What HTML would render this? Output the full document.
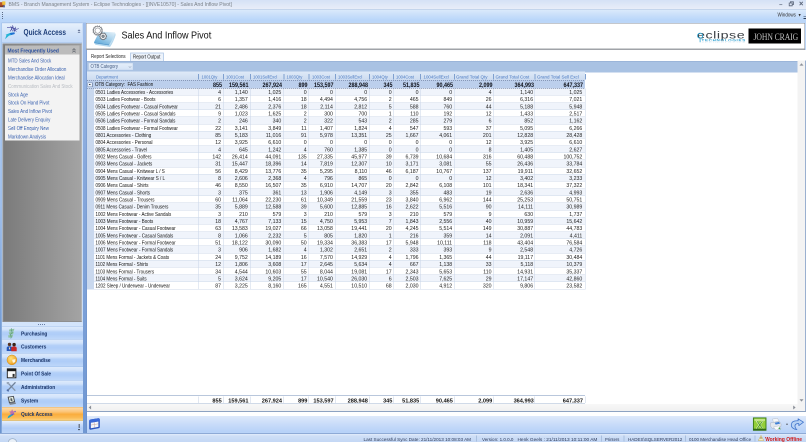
<!DOCTYPE html>
<html><head><meta charset="utf-8"><title>BMS - Sales And Inflow Pivot</title>
<style>
html,body{margin:0;padding:0;}
html{background:#bbd6f8;}
body{width:806px;height:442px;overflow:hidden;position:relative;font-family:"Liberation Sans",sans-serif;font-size:5px;color:#222;}
div{position:absolute;box-sizing:border-box;white-space:nowrap;}
#title{left:0;top:0;width:806px;height:9px;background:linear-gradient(#d5e2f6,#e9eef9);}
#title .t{left:8.7px;top:0.3px;font-size:5.5px;color:#7a8088;line-height:7px;transform:scaleX(.922);transform-origin:0 0;}
#menu{left:0;top:8.9px;width:806px;height:11.7px;background:linear-gradient(#dcebfc,#c8defa 55%,#b9d6fa);border-top:0.8px solid #adc0dc;}
#menu .w{left:777.3px;top:2.7px;font-size:5px;color:#333;line-height:6px;transform:scaleX(.91);transform-origin:0 0;}
/* left panel */
#lp{left:1.4px;top:22.4px;width:81.8px;height:410.6px;background:#c9ddf7;border:0.8px solid #9ebde6;border-right-color:#c9ddf7;}
#qa{left:2.2px;top:23.4px;width:80px;height:19px;background:linear-gradient(#e6f0fc,#d4e4f9 50%,#c4dbf9);border-bottom:0.8px solid #9dbbe6;}
#qa .t{left:21.1px;top:4.2px;font-size:7.8px;font-weight:bold;color:#1e3f7a;line-height:10px;transform:scaleX(.835);transform-origin:0 0;}
#gbx{left:2.6px;top:43.4px;width:79.2px;height:278.4px;background:linear-gradient(90deg,#7b7b7b,#a4a4a4);border:1px solid #8e8e8e;border-right-color:#b4b4b4;}
#mfu{left:5px;top:45.6px;width:74.6px;height:8.7px;background:#bcbcbc;}
#mfu .t{left:2.7px;top:1.5px;font-size:5.6px;font-weight:bold;color:#2a4f9e;line-height:7px;transform:scaleX(.88);transform-origin:0 0;}
#lst{left:5px;top:54.3px;width:74.6px;height:86.2px;background:#f3f3f3;}
.li{left:8.1px;font-size:5.3px;line-height:8px;color:#3a62b0;transform:scaleX(.84);transform-origin:0 0;}
.li.dis{color:#b8bcc2;}
#split{left:2.2px;top:321.8px;width:80.6px;height:4.6px;background:#d3e4fb;}
.nav{left:2.2px;width:80.6px;background:linear-gradient(#deebfc,#d2e3fb 26%,#b3d0f8 44%,#afcdf8 62%,#bfd8fa);border-top:0.9px solid #9fbfea;}
.nav span{position:absolute;left:18.9px;top:3.2px;font-size:5.5px;font-weight:bold;color:#1a3468;line-height:7px;transform:scaleX(.88);transform-origin:0 0;}
.nav.sel{background:linear-gradient(#fddcae,#fcc67a 32%,#faad3e 52%,#fbbb54 78%,#fdd582);border-top-color:#e8b060;}
#lbot{left:2.2px;top:420.7px;width:80.6px;height:12.3px;background:linear-gradient(#e6effc,#c4d9f9 35%,#b2cef8 60%,#bdd6f9);border-top:0.6px solid #c9b27a;}
/* main */
#vsep{left:83.1px;top:22.4px;width:3px;height:411px;background:linear-gradient(#a0beea,#88a9dc 35%,#7098d3);}
#lmar{left:0;top:21px;width:1.8px;height:412px;background:linear-gradient(#b9d5f8,#9fbfec 45%,#6c96d1 80%,#6a93cf);}
#vline{left:86px;top:50px;width:0.9px;height:383px;background:linear-gradient(#86a6d8,#6d92cc);}
#hdr{left:85.8px;top:23.2px;width:719.2px;height:26.6px;background:#fff;border:0.9px solid #8a909a;border-bottom:1.5px solid #a0a3a8;}
#hdr .t{left:35.1px;top:5.5px;font-size:10.4px;color:#111;line-height:12px;transform:scaleX(.872);transform-origin:0 0;}
#tabs{left:85.8px;top:50px;width:720px;height:11px;background:#fff;}
#tab1{left:91px;top:53px;font-size:5px;line-height:7px;color:#222;transform:scaleX(.876);transform-origin:0 0;}
#tab2{left:130px;top:52.4px;width:34px;height:8.4px;border:1px solid #bcd0ea;border-bottom:none;background:#edf3fb;border-radius:1px 1px 0 0;}
#tab2 .t{left:1.9px;top:0px;font-size:5px;line-height:7px;color:#222;transform:scaleX(.87);transform-origin:0 0;}
#band{left:85.8px;top:60.6px;width:712px;height:11.8px;background:#a9c2e3;border-top:1px solid #8ea9d0;}
#otb{left:88.7px;top:62.9px;width:44.1px;height:7px;background:linear-gradient(#e4eefa,#d6e4f6);border:0.6px solid #c9d9ee;}
#otb .t{left:1.2px;top:0px;font-size:5px;line-height:6px;color:#465c82;transform:scaleX(.86);transform-origin:0 0;}
#gridbg{left:85.8px;top:72.4px;width:712px;height:331px;background:#fff;}
.hrow{left:87px;width:498px;background:linear-gradient(#dfeaf8,#cddcf0);}
.ht{font-size:4.8px;line-height:8px;color:#4d7cc4;transform-origin:0 0;}
.hsep{width:1px;height:5.4px;background:#7fa0cf;}
.grow{background:linear-gradient(90deg,rgba(50,62,96,.75) 50%,transparent 50%) 0 0/2px 0.5px repeat-x,linear-gradient(90deg,rgba(50,62,96,.75) 50%,transparent 50%) 0 100%/2px 0.5px repeat-x,#bccfec;z-index:2;}
.gbox{z-index:3;width:4.8px;height:4.6px;border:0.8px solid #8497b8;background:#e6eef9;}
.gbox:after{content:'';position:absolute;left:0.7px;top:1.2px;width:1.8px;height:0.7px;background:#444;}
.gt{z-index:3;font-size:5.2px;line-height:7.4px;color:#111;transform:scaleX(.865);transform-origin:0 0;}
.gn{font-size:6px;line-height:7.4px;font-weight:bold;color:#10131c;text-align:right;transform:scaleX(.9);transform-origin:100% 0;z-index:3;}
.drow{background:#fff;border-bottom:0.5px solid #cfdaea;}
.drow.alt{background:#f0f4fb;}
.dt{font-size:5.2px;line-height:7.2px;color:#111;transform:scaleX(.865);transform-origin:0 0;}
.dn{font-size:5.2px;line-height:7.2px;color:#222;text-align:right;}
.ind{background:#c9d8ee;}
.vl{width:0.5px;background:#c9d5e8;}
.fn{font-size:5.6px;line-height:7px;font-weight:bold;color:#111;text-align:right;}
.fvl{width:0.5px;height:6.6px;background:#c3cfe2;}
#fline{left:85.8px;top:395.2px;width:499.4px;height:1px;background:#b9c7dc;}
#fline2{left:85.8px;top:403.1px;width:499.4px;height:0.8px;background:#d0dae8;}
#hscroll{left:85.8px;top:404px;width:712px;height:6.8px;background:linear-gradient(#f8f8f8,#f1f1f1);}
#vscroll{left:797.6px;top:60.6px;width:8.4px;height:350.4px;background:#f3f3f3;border-right:1px solid #9ab0d0;}
#bline{left:85.8px;top:410.8px;width:720.2px;height:1px;background:#8ea3c2;}
#bwhite{left:85.8px;top:411.8px;width:720.2px;height:4.3px;background:#fff;}
#btool{left:85.8px;top:416px;width:720.2px;height:16.6px;background:linear-gradient(#dfeafb,#c9dcf9 50%,#b6d1f8);}
#sline{left:0;top:432.6px;width:806px;height:1.4px;background:#8eaad6;border-top:0.6px solid #e6effc;}
#status{left:0;top:434px;width:806px;height:8px;background:linear-gradient(#e3edfb,#cfdff7 25%,#c4d8f5);}
#status .s{top:2.3px;font-size:4.8px;line-height:6px;color:#2c3a5a;transform-origin:0 0;}
#status .sep{top:1.6px;width:1px;height:6px;background:#a9bfde;}

svg{position:absolute;overflow:visible;}
#grip{left:2px;top:12px;width:1px;height:7px;background:repeating-linear-gradient(#5a6a86 0,#5a6a86 1px,transparent 1px,transparent 2px);}
#wc{left:776px;top:0px;width:30px;height:9px;}
#ovf{left:803.4px;top:15.6px;width:2.6px;height:3.4px;border-top:1px solid #2b3a55;border-bottom:1.2px solid #2b3a55;}
#jc{left:748.7px;top:28.4px;width:52.5px;height:15.3px;background:#000;}
#jc .t{left:4.6px;top:3.1px;font-family:"Liberation Serif",serif;font-size:9.2px;line-height:11px;color:#c2c2c2;transform:scaleX(.835);transform-origin:0 0;letter-spacing:-0.1px;}
#ecl{left:696.8px;top:29.1px;font-size:10.4px;line-height:12px;color:#3a3f44;letter-spacing:0.4px;transform:scaleX(1.37);transform-origin:0 0;}
#ecl2{left:701.4px;top:38.1px;font-size:3.9px;line-height:5px;color:#2a9fd0;font-weight:bold;letter-spacing:0.62px;transform:scaleX(1.15);transform-origin:0 0;}
#ecl3{left:701.4px;top:43.4px;font-size:3.9px;line-height:5px;color:#e4eef5;font-weight:bold;letter-spacing:0.62px;transform:scale(1.15,-0.7);transform-origin:0 0;}
#pin{left:77.8px;top:28.7px;font-size:4.6px;line-height:5px;color:#2b3a66;font-weight:bold;}
#chev{left:74.6px;top:47.6px;font-size:5px;line-height:6px;color:#555;}
#sdots{left:38px;top:323.8px;width:7px;height:1px;background:repeating-linear-gradient(90deg,#6a7fa6 0,#6a7fa6 1px,transparent 1px,transparent 2px);}
#lbdots{left:78.6px;top:424.6px;width:1.6px;height:3px;border-top:1px solid #222;border-bottom:1px solid #222;}
#lbarr{left:78px;top:429px;width:0;height:0;border-left:1.4px solid transparent;border-right:1.4px solid transparent;border-top:1.8px solid #222;}
.sarr{font-size:4px;line-height:5px;color:#8a8f98;}
#sc{left:0;top:0;width:1612px;height:884px;transform:scale(.5);transform-origin:0 0;will-change:transform;}
#z{left:0;top:0;width:806px;height:442px;zoom:2;}
</style></head><body><div id="sc"><div id="z">
<div id="title"><div class="t">BMS - Branch Management System - Eclipse Technologies - [[INVE10570] - Sales And Inflow Pivot]</div></div>
<div id="menu"><div class="w">Windows &nbsp;▾</div></div>
<div id="lmar"></div>
<div id="lp"></div>
<div id="qa"><div class="t">Quick Access</div></div>
<div id="gbx"></div>
<div id="mfu"><div class="t">Most Frequently Used</div></div>
<div id="lst"></div>
<div class="li" style="top:56.60px">MTD Sales And Stock</div>
<div class="li" style="top:65.02px">Merchandise Order Allocation</div>
<div class="li" style="top:73.44px">Merchandise Allocation Ideal</div>
<div class="li dis" style="top:81.86px">Communication Sales And Stock</div>
<div class="li" style="top:90.28px">Stock Age</div>
<div class="li" style="top:98.70px">Stock On Hand Pivot</div>
<div class="li" style="top:107.12px">Sales And Inflow Pivot</div>
<div class="li" style="top:115.54px">Late Delivery Enquiry</div>
<div class="li" style="top:123.96px">Sell Off Enquiry New</div>
<div class="li" style="top:132.38px">Markdown Analysis</div>
<div id="split"></div>
<div class="nav" style="top:326.2px;height:12.9px"><span>Purchasing</span></div>
<div class="nav" style="top:339.1px;height:13.8px"><span>Customers</span></div>
<div class="nav" style="top:352.9px;height:13.5px"><span>Merchandise</span></div>
<div class="nav" style="top:366.4px;height:13.5px"><span>Point Of Sale</span></div>
<div class="nav" style="top:379.9px;height:13.6px"><span>Administration</span></div>
<div class="nav" style="top:393.5px;height:13.3px"><span>System</span></div>
<div class="nav sel" style="top:406.8px;height:13.9px"><span>Quick Access</span></div>
<div id="lbot"></div>
<div id="vsep"></div>
<div id="hdr"><div class="t">Sales And Inflow Pivot</div></div>
<div id="tabs"></div>
<div id="tab1">Report Selections</div>
<div id="tab2"><div class="t">Report Output</div></div>
<div id="band"></div>
<div id="otb"><div class="t">OTB Category</div><svg style="left:39.4px;top:2.6px" width="3" height="2" viewBox="0 0 3 2"><path d="M0.2 0.3 L1.5 1.6 L2.8 0.3" stroke="#7d8ea8" stroke-width="0.5" fill="none"/></svg></div>
<div id="gridbg"></div>
<div class="hrow" style="top:71.7px;height:8.50px"></div>
<div class="ht" style="left:96.2px;top:72.8px;transform:scaleX(.875)">Department</div>
<div class="hsep" style="left:198.1px;top:74.10000000000001px"></div>
<div class="ht" style="left:201.3px;top:72.8px;transform:scaleX(0.875)">1001Qty</div>
<div class="hsep" style="left:222.9px;top:74.10000000000001px"></div>
<div class="ht" style="left:226.1px;top:72.8px;transform:scaleX(0.875)">1001Cost</div>
<div class="hsep" style="left:249.8px;top:74.10000000000001px"></div>
<div class="ht" style="left:253.0px;top:72.8px;transform:scaleX(0.875)">1001SellExcl</div>
<div class="hsep" style="left:283.3px;top:74.10000000000001px"></div>
<div class="ht" style="left:286.5px;top:72.8px;transform:scaleX(0.875)">1003Qty</div>
<div class="hsep" style="left:308.7px;top:74.10000000000001px"></div>
<div class="ht" style="left:311.9px;top:72.8px;transform:scaleX(0.875)">1003Cost</div>
<div class="hsep" style="left:335.0px;top:74.10000000000001px"></div>
<div class="ht" style="left:338.2px;top:72.8px;transform:scaleX(0.875)">1003SellExcl</div>
<div class="hsep" style="left:368.9px;top:74.10000000000001px"></div>
<div class="ht" style="left:372.1px;top:72.8px;transform:scaleX(0.875)">1004Qty</div>
<div class="hsep" style="left:393.0px;top:74.10000000000001px"></div>
<div class="ht" style="left:396.2px;top:72.8px;transform:scaleX(0.875)">1004Cost</div>
<div class="hsep" style="left:420.2px;top:74.10000000000001px"></div>
<div class="ht" style="left:423.4px;top:72.8px;transform:scaleX(0.915)">1004SellExcl</div>
<div class="hsep" style="left:453.8px;top:74.10000000000001px"></div>
<div class="ht" style="left:456.2px;top:72.8px;transform:scaleX(0.94)">Grand Total Qty</div>
<div class="hsep" style="left:493.1px;top:74.10000000000001px"></div>
<div class="ht" style="left:495.5px;top:72.8px;transform:scaleX(0.94)">Grand Total Cost</div>
<div class="hsep" style="left:534.7px;top:74.10000000000001px"></div>
<div class="ht" style="left:537.1px;top:72.8px;transform:scaleX(0.94)">Grand Total Sell Excl</div>
<div class="hsep" style="left:585.2px;top:74.10000000000001px"></div>
<div class="grow" style="top:80.2px;height:8.40px;left:87.0px;width:498.2px"></div>
<div class="gbox" style="left:87.6px;top:82.4px"></div>
<div class="gt" style="left:95.1px;top:81.10000000000001px">OTB Category:&nbsp; FAS Fashion</div>
<div class="gn" style="left:181.8px;width:40px;top:81.3px">855</div>
<div class="gn" style="left:208.6px;width:40px;top:81.3px">159,561</div>
<div class="gn" style="left:242.1px;width:40px;top:81.3px">267,924</div>
<div class="gn" style="left:267.5px;width:40px;top:81.3px">899</div>
<div class="gn" style="left:293.7px;width:40px;top:81.3px">153,597</div>
<div class="gn" style="left:328.0px;width:40px;top:81.3px">288,948</div>
<div class="gn" style="left:352.5px;width:40px;top:81.3px">345</div>
<div class="gn" style="left:379.3px;width:40px;top:81.3px">51,835</div>
<div class="gn" style="left:413.0px;width:40px;top:81.3px">90,465</div>
<div class="gn" style="left:452.3px;width:40px;top:81.3px">2,099</div>
<div class="gn" style="left:493.9px;width:40px;top:81.3px">364,993</div>
<div class="gn" style="left:543.1px;width:40px;top:81.3px">647,337</div>
<div class="drow alt" style="top:88.50px;height:7.17px;left:94.0px;width:491.2px"></div>
<div class="dt" style="left:95.5px;top:89.00px">0501 Ladies Accessories - Accessories</div>
<div class="dn" style="left:181.0px;width:40px;top:89.00px">4</div>
<div class="dn" style="left:207.8px;width:40px;top:89.00px">1,140</div>
<div class="dn" style="left:241.3px;width:40px;top:89.00px">1,025</div>
<div class="dn" style="left:266.7px;width:40px;top:89.00px">0</div>
<div class="dn" style="left:292.9px;width:40px;top:89.00px">0</div>
<div class="dn" style="left:327.2px;width:40px;top:89.00px">0</div>
<div class="dn" style="left:351.7px;width:40px;top:89.00px">0</div>
<div class="dn" style="left:378.5px;width:40px;top:89.00px">0</div>
<div class="dn" style="left:412.2px;width:40px;top:89.00px">0</div>
<div class="dn" style="left:451.5px;width:40px;top:89.00px">4</div>
<div class="dn" style="left:493.1px;width:40px;top:89.00px">1,140</div>
<div class="dn" style="left:542.3px;width:40px;top:89.00px">1,025</div>
<div class="drow" style="top:95.67px;height:7.17px;left:94.0px;width:491.2px"></div>
<div class="dt" style="left:95.5px;top:96.17px">0503 Ladies Footwear - Boots</div>
<div class="dn" style="left:181.0px;width:40px;top:96.17px">6</div>
<div class="dn" style="left:207.8px;width:40px;top:96.17px">1,357</div>
<div class="dn" style="left:241.3px;width:40px;top:96.17px">1,416</div>
<div class="dn" style="left:266.7px;width:40px;top:96.17px">18</div>
<div class="dn" style="left:292.9px;width:40px;top:96.17px">4,494</div>
<div class="dn" style="left:327.2px;width:40px;top:96.17px">4,756</div>
<div class="dn" style="left:351.7px;width:40px;top:96.17px">2</div>
<div class="dn" style="left:378.5px;width:40px;top:96.17px">465</div>
<div class="dn" style="left:412.2px;width:40px;top:96.17px">849</div>
<div class="dn" style="left:451.5px;width:40px;top:96.17px">26</div>
<div class="dn" style="left:493.1px;width:40px;top:96.17px">6,316</div>
<div class="dn" style="left:542.3px;width:40px;top:96.17px">7,021</div>
<div class="drow alt" style="top:102.84px;height:7.17px;left:94.0px;width:491.2px"></div>
<div class="dt" style="left:95.5px;top:103.34px">0504 Ladies Footwear - Casual Footwear</div>
<div class="dn" style="left:181.0px;width:40px;top:103.34px">21</div>
<div class="dn" style="left:207.8px;width:40px;top:103.34px">2,486</div>
<div class="dn" style="left:241.3px;width:40px;top:103.34px">2,376</div>
<div class="dn" style="left:266.7px;width:40px;top:103.34px">18</div>
<div class="dn" style="left:292.9px;width:40px;top:103.34px">2,114</div>
<div class="dn" style="left:327.2px;width:40px;top:103.34px">2,812</div>
<div class="dn" style="left:351.7px;width:40px;top:103.34px">5</div>
<div class="dn" style="left:378.5px;width:40px;top:103.34px">588</div>
<div class="dn" style="left:412.2px;width:40px;top:103.34px">760</div>
<div class="dn" style="left:451.5px;width:40px;top:103.34px">44</div>
<div class="dn" style="left:493.1px;width:40px;top:103.34px">5,188</div>
<div class="dn" style="left:542.3px;width:40px;top:103.34px">5,948</div>
<div class="drow" style="top:110.01px;height:7.17px;left:94.0px;width:491.2px"></div>
<div class="dt" style="left:95.5px;top:110.51px">0505 Ladies Footwear - Casual Sandals</div>
<div class="dn" style="left:181.0px;width:40px;top:110.51px">9</div>
<div class="dn" style="left:207.8px;width:40px;top:110.51px">1,023</div>
<div class="dn" style="left:241.3px;width:40px;top:110.51px">1,625</div>
<div class="dn" style="left:266.7px;width:40px;top:110.51px">2</div>
<div class="dn" style="left:292.9px;width:40px;top:110.51px">300</div>
<div class="dn" style="left:327.2px;width:40px;top:110.51px">700</div>
<div class="dn" style="left:351.7px;width:40px;top:110.51px">1</div>
<div class="dn" style="left:378.5px;width:40px;top:110.51px">110</div>
<div class="dn" style="left:412.2px;width:40px;top:110.51px">192</div>
<div class="dn" style="left:451.5px;width:40px;top:110.51px">12</div>
<div class="dn" style="left:493.1px;width:40px;top:110.51px">1,433</div>
<div class="dn" style="left:542.3px;width:40px;top:110.51px">2,517</div>
<div class="drow alt" style="top:117.18px;height:7.17px;left:94.0px;width:491.2px"></div>
<div class="dt" style="left:95.5px;top:117.68px">0506 Ladies Footwear - Formal Sandals</div>
<div class="dn" style="left:181.0px;width:40px;top:117.68px">2</div>
<div class="dn" style="left:207.8px;width:40px;top:117.68px">246</div>
<div class="dn" style="left:241.3px;width:40px;top:117.68px">340</div>
<div class="dn" style="left:266.7px;width:40px;top:117.68px">2</div>
<div class="dn" style="left:292.9px;width:40px;top:117.68px">322</div>
<div class="dn" style="left:327.2px;width:40px;top:117.68px">543</div>
<div class="dn" style="left:351.7px;width:40px;top:117.68px">2</div>
<div class="dn" style="left:378.5px;width:40px;top:117.68px">285</div>
<div class="dn" style="left:412.2px;width:40px;top:117.68px">279</div>
<div class="dn" style="left:451.5px;width:40px;top:117.68px">6</div>
<div class="dn" style="left:493.1px;width:40px;top:117.68px">852</div>
<div class="dn" style="left:542.3px;width:40px;top:117.68px">1,162</div>
<div class="drow" style="top:124.35px;height:7.17px;left:94.0px;width:491.2px"></div>
<div class="dt" style="left:95.5px;top:124.85px">0508 Ladies Footwear - Formal Footwear</div>
<div class="dn" style="left:181.0px;width:40px;top:124.85px">22</div>
<div class="dn" style="left:207.8px;width:40px;top:124.85px">3,141</div>
<div class="dn" style="left:241.3px;width:40px;top:124.85px">3,849</div>
<div class="dn" style="left:266.7px;width:40px;top:124.85px">11</div>
<div class="dn" style="left:292.9px;width:40px;top:124.85px">1,407</div>
<div class="dn" style="left:327.2px;width:40px;top:124.85px">1,824</div>
<div class="dn" style="left:351.7px;width:40px;top:124.85px">4</div>
<div class="dn" style="left:378.5px;width:40px;top:124.85px">547</div>
<div class="dn" style="left:412.2px;width:40px;top:124.85px">593</div>
<div class="dn" style="left:451.5px;width:40px;top:124.85px">37</div>
<div class="dn" style="left:493.1px;width:40px;top:124.85px">5,095</div>
<div class="dn" style="left:542.3px;width:40px;top:124.85px">6,266</div>
<div class="drow alt" style="top:131.52px;height:7.17px;left:94.0px;width:491.2px"></div>
<div class="dt" style="left:95.5px;top:132.02px">0801 Accessories - Clothing</div>
<div class="dn" style="left:181.0px;width:40px;top:132.02px">85</div>
<div class="dn" style="left:207.8px;width:40px;top:132.02px">5,183</div>
<div class="dn" style="left:241.3px;width:40px;top:132.02px">11,016</div>
<div class="dn" style="left:266.7px;width:40px;top:132.02px">91</div>
<div class="dn" style="left:292.9px;width:40px;top:132.02px">5,978</div>
<div class="dn" style="left:327.2px;width:40px;top:132.02px">13,351</div>
<div class="dn" style="left:351.7px;width:40px;top:132.02px">25</div>
<div class="dn" style="left:378.5px;width:40px;top:132.02px">1,667</div>
<div class="dn" style="left:412.2px;width:40px;top:132.02px">4,061</div>
<div class="dn" style="left:451.5px;width:40px;top:132.02px">201</div>
<div class="dn" style="left:493.1px;width:40px;top:132.02px">12,828</div>
<div class="dn" style="left:542.3px;width:40px;top:132.02px">28,428</div>
<div class="drow" style="top:138.69px;height:7.17px;left:94.0px;width:491.2px"></div>
<div class="dt" style="left:95.5px;top:139.19px">0804 Accessories - Personal</div>
<div class="dn" style="left:181.0px;width:40px;top:139.19px">12</div>
<div class="dn" style="left:207.8px;width:40px;top:139.19px">3,925</div>
<div class="dn" style="left:241.3px;width:40px;top:139.19px">6,610</div>
<div class="dn" style="left:266.7px;width:40px;top:139.19px">0</div>
<div class="dn" style="left:292.9px;width:40px;top:139.19px">0</div>
<div class="dn" style="left:327.2px;width:40px;top:139.19px">0</div>
<div class="dn" style="left:351.7px;width:40px;top:139.19px">0</div>
<div class="dn" style="left:378.5px;width:40px;top:139.19px">0</div>
<div class="dn" style="left:412.2px;width:40px;top:139.19px">0</div>
<div class="dn" style="left:451.5px;width:40px;top:139.19px">12</div>
<div class="dn" style="left:493.1px;width:40px;top:139.19px">3,925</div>
<div class="dn" style="left:542.3px;width:40px;top:139.19px">6,610</div>
<div class="drow alt" style="top:145.86px;height:7.17px;left:94.0px;width:491.2px"></div>
<div class="dt" style="left:95.5px;top:146.36px">0805 Accessories - Travel</div>
<div class="dn" style="left:181.0px;width:40px;top:146.36px">4</div>
<div class="dn" style="left:207.8px;width:40px;top:146.36px">645</div>
<div class="dn" style="left:241.3px;width:40px;top:146.36px">1,242</div>
<div class="dn" style="left:266.7px;width:40px;top:146.36px">4</div>
<div class="dn" style="left:292.9px;width:40px;top:146.36px">760</div>
<div class="dn" style="left:327.2px;width:40px;top:146.36px">1,385</div>
<div class="dn" style="left:351.7px;width:40px;top:146.36px">0</div>
<div class="dn" style="left:378.5px;width:40px;top:146.36px">0</div>
<div class="dn" style="left:412.2px;width:40px;top:146.36px">0</div>
<div class="dn" style="left:451.5px;width:40px;top:146.36px">8</div>
<div class="dn" style="left:493.1px;width:40px;top:146.36px">1,405</div>
<div class="dn" style="left:542.3px;width:40px;top:146.36px">2,627</div>
<div class="drow" style="top:153.03px;height:7.17px;left:94.0px;width:491.2px"></div>
<div class="dt" style="left:95.5px;top:153.53px">0902 Mens Casual - Golfers</div>
<div class="dn" style="left:181.0px;width:40px;top:153.53px">142</div>
<div class="dn" style="left:207.8px;width:40px;top:153.53px">26,414</div>
<div class="dn" style="left:241.3px;width:40px;top:153.53px">44,091</div>
<div class="dn" style="left:266.7px;width:40px;top:153.53px">135</div>
<div class="dn" style="left:292.9px;width:40px;top:153.53px">27,335</div>
<div class="dn" style="left:327.2px;width:40px;top:153.53px">45,977</div>
<div class="dn" style="left:351.7px;width:40px;top:153.53px">39</div>
<div class="dn" style="left:378.5px;width:40px;top:153.53px">6,739</div>
<div class="dn" style="left:412.2px;width:40px;top:153.53px">10,684</div>
<div class="dn" style="left:451.5px;width:40px;top:153.53px">316</div>
<div class="dn" style="left:493.1px;width:40px;top:153.53px">60,488</div>
<div class="dn" style="left:542.3px;width:40px;top:153.53px">100,752</div>
<div class="drow alt" style="top:160.20px;height:7.17px;left:94.0px;width:491.2px"></div>
<div class="dt" style="left:95.5px;top:160.70px">0903 Mens Casual - Jackets</div>
<div class="dn" style="left:181.0px;width:40px;top:160.70px">31</div>
<div class="dn" style="left:207.8px;width:40px;top:160.70px">15,447</div>
<div class="dn" style="left:241.3px;width:40px;top:160.70px">18,396</div>
<div class="dn" style="left:266.7px;width:40px;top:160.70px">14</div>
<div class="dn" style="left:292.9px;width:40px;top:160.70px">7,819</div>
<div class="dn" style="left:327.2px;width:40px;top:160.70px">12,307</div>
<div class="dn" style="left:351.7px;width:40px;top:160.70px">10</div>
<div class="dn" style="left:378.5px;width:40px;top:160.70px">3,171</div>
<div class="dn" style="left:412.2px;width:40px;top:160.70px">3,081</div>
<div class="dn" style="left:451.5px;width:40px;top:160.70px">55</div>
<div class="dn" style="left:493.1px;width:40px;top:160.70px">26,436</div>
<div class="dn" style="left:542.3px;width:40px;top:160.70px">33,784</div>
<div class="drow" style="top:167.37px;height:7.17px;left:94.0px;width:491.2px"></div>
<div class="dt" style="left:95.5px;top:167.87px">0904 Mens Casual - Knitwear L / S</div>
<div class="dn" style="left:181.0px;width:40px;top:167.87px">56</div>
<div class="dn" style="left:207.8px;width:40px;top:167.87px">8,429</div>
<div class="dn" style="left:241.3px;width:40px;top:167.87px">13,776</div>
<div class="dn" style="left:266.7px;width:40px;top:167.87px">35</div>
<div class="dn" style="left:292.9px;width:40px;top:167.87px">5,295</div>
<div class="dn" style="left:327.2px;width:40px;top:167.87px">8,110</div>
<div class="dn" style="left:351.7px;width:40px;top:167.87px">46</div>
<div class="dn" style="left:378.5px;width:40px;top:167.87px">6,187</div>
<div class="dn" style="left:412.2px;width:40px;top:167.87px">10,767</div>
<div class="dn" style="left:451.5px;width:40px;top:167.87px">137</div>
<div class="dn" style="left:493.1px;width:40px;top:167.87px">19,911</div>
<div class="dn" style="left:542.3px;width:40px;top:167.87px">32,652</div>
<div class="drow alt" style="top:174.54px;height:7.17px;left:94.0px;width:491.2px"></div>
<div class="dt" style="left:95.5px;top:175.04px">0905 Mens Casual - Knitwear S / L</div>
<div class="dn" style="left:181.0px;width:40px;top:175.04px">8</div>
<div class="dn" style="left:207.8px;width:40px;top:175.04px">2,606</div>
<div class="dn" style="left:241.3px;width:40px;top:175.04px">2,368</div>
<div class="dn" style="left:266.7px;width:40px;top:175.04px">4</div>
<div class="dn" style="left:292.9px;width:40px;top:175.04px">796</div>
<div class="dn" style="left:327.2px;width:40px;top:175.04px">865</div>
<div class="dn" style="left:351.7px;width:40px;top:175.04px">0</div>
<div class="dn" style="left:378.5px;width:40px;top:175.04px">0</div>
<div class="dn" style="left:412.2px;width:40px;top:175.04px">0</div>
<div class="dn" style="left:451.5px;width:40px;top:175.04px">12</div>
<div class="dn" style="left:493.1px;width:40px;top:175.04px">3,402</div>
<div class="dn" style="left:542.3px;width:40px;top:175.04px">3,233</div>
<div class="drow" style="top:181.71px;height:7.17px;left:94.0px;width:491.2px"></div>
<div class="dt" style="left:95.5px;top:182.21px">0906 Mens Casual - Shirts</div>
<div class="dn" style="left:181.0px;width:40px;top:182.21px">46</div>
<div class="dn" style="left:207.8px;width:40px;top:182.21px">8,550</div>
<div class="dn" style="left:241.3px;width:40px;top:182.21px">16,507</div>
<div class="dn" style="left:266.7px;width:40px;top:182.21px">35</div>
<div class="dn" style="left:292.9px;width:40px;top:182.21px">6,910</div>
<div class="dn" style="left:327.2px;width:40px;top:182.21px">14,707</div>
<div class="dn" style="left:351.7px;width:40px;top:182.21px">20</div>
<div class="dn" style="left:378.5px;width:40px;top:182.21px">2,842</div>
<div class="dn" style="left:412.2px;width:40px;top:182.21px">6,108</div>
<div class="dn" style="left:451.5px;width:40px;top:182.21px">101</div>
<div class="dn" style="left:493.1px;width:40px;top:182.21px">18,341</div>
<div class="dn" style="left:542.3px;width:40px;top:182.21px">37,322</div>
<div class="drow alt" style="top:188.88px;height:7.17px;left:94.0px;width:491.2px"></div>
<div class="dt" style="left:95.5px;top:189.38px">0907 Mens Casual - Shorts</div>
<div class="dn" style="left:181.0px;width:40px;top:189.38px">3</div>
<div class="dn" style="left:207.8px;width:40px;top:189.38px">375</div>
<div class="dn" style="left:241.3px;width:40px;top:189.38px">361</div>
<div class="dn" style="left:266.7px;width:40px;top:189.38px">13</div>
<div class="dn" style="left:292.9px;width:40px;top:189.38px">1,906</div>
<div class="dn" style="left:327.2px;width:40px;top:189.38px">4,149</div>
<div class="dn" style="left:351.7px;width:40px;top:189.38px">3</div>
<div class="dn" style="left:378.5px;width:40px;top:189.38px">355</div>
<div class="dn" style="left:412.2px;width:40px;top:189.38px">483</div>
<div class="dn" style="left:451.5px;width:40px;top:189.38px">19</div>
<div class="dn" style="left:493.1px;width:40px;top:189.38px">2,636</div>
<div class="dn" style="left:542.3px;width:40px;top:189.38px">4,993</div>
<div class="drow" style="top:196.05px;height:7.17px;left:94.0px;width:491.2px"></div>
<div class="dt" style="left:95.5px;top:196.55px">0909 Mens Casual - Trousers</div>
<div class="dn" style="left:181.0px;width:40px;top:196.55px">60</div>
<div class="dn" style="left:207.8px;width:40px;top:196.55px">11,064</div>
<div class="dn" style="left:241.3px;width:40px;top:196.55px">22,230</div>
<div class="dn" style="left:266.7px;width:40px;top:196.55px">61</div>
<div class="dn" style="left:292.9px;width:40px;top:196.55px">10,349</div>
<div class="dn" style="left:327.2px;width:40px;top:196.55px">21,559</div>
<div class="dn" style="left:351.7px;width:40px;top:196.55px">23</div>
<div class="dn" style="left:378.5px;width:40px;top:196.55px">3,840</div>
<div class="dn" style="left:412.2px;width:40px;top:196.55px">6,962</div>
<div class="dn" style="left:451.5px;width:40px;top:196.55px">144</div>
<div class="dn" style="left:493.1px;width:40px;top:196.55px">25,253</div>
<div class="dn" style="left:542.3px;width:40px;top:196.55px">50,751</div>
<div class="drow alt" style="top:203.22px;height:7.17px;left:94.0px;width:491.2px"></div>
<div class="dt" style="left:95.5px;top:203.72px">0911 Mens Casual - Denim Trousers</div>
<div class="dn" style="left:181.0px;width:40px;top:203.72px">35</div>
<div class="dn" style="left:207.8px;width:40px;top:203.72px">5,889</div>
<div class="dn" style="left:241.3px;width:40px;top:203.72px">12,588</div>
<div class="dn" style="left:266.7px;width:40px;top:203.72px">39</div>
<div class="dn" style="left:292.9px;width:40px;top:203.72px">5,600</div>
<div class="dn" style="left:327.2px;width:40px;top:203.72px">12,885</div>
<div class="dn" style="left:351.7px;width:40px;top:203.72px">16</div>
<div class="dn" style="left:378.5px;width:40px;top:203.72px">2,622</div>
<div class="dn" style="left:412.2px;width:40px;top:203.72px">5,516</div>
<div class="dn" style="left:451.5px;width:40px;top:203.72px">90</div>
<div class="dn" style="left:493.1px;width:40px;top:203.72px">14,111</div>
<div class="dn" style="left:542.3px;width:40px;top:203.72px">30,989</div>
<div class="drow" style="top:210.39px;height:7.17px;left:94.0px;width:491.2px"></div>
<div class="dt" style="left:95.5px;top:210.89px">1002 Mens Footwear - Active Sandals</div>
<div class="dn" style="left:181.0px;width:40px;top:210.89px">3</div>
<div class="dn" style="left:207.8px;width:40px;top:210.89px">210</div>
<div class="dn" style="left:241.3px;width:40px;top:210.89px">579</div>
<div class="dn" style="left:266.7px;width:40px;top:210.89px">3</div>
<div class="dn" style="left:292.9px;width:40px;top:210.89px">210</div>
<div class="dn" style="left:327.2px;width:40px;top:210.89px">579</div>
<div class="dn" style="left:351.7px;width:40px;top:210.89px">3</div>
<div class="dn" style="left:378.5px;width:40px;top:210.89px">210</div>
<div class="dn" style="left:412.2px;width:40px;top:210.89px">579</div>
<div class="dn" style="left:451.5px;width:40px;top:210.89px">9</div>
<div class="dn" style="left:493.1px;width:40px;top:210.89px">630</div>
<div class="dn" style="left:542.3px;width:40px;top:210.89px">1,737</div>
<div class="drow alt" style="top:217.56px;height:7.17px;left:94.0px;width:491.2px"></div>
<div class="dt" style="left:95.5px;top:218.06px">1003 Mens Footwear - Boots</div>
<div class="dn" style="left:181.0px;width:40px;top:218.06px">18</div>
<div class="dn" style="left:207.8px;width:40px;top:218.06px">4,767</div>
<div class="dn" style="left:241.3px;width:40px;top:218.06px">7,133</div>
<div class="dn" style="left:266.7px;width:40px;top:218.06px">15</div>
<div class="dn" style="left:292.9px;width:40px;top:218.06px">4,750</div>
<div class="dn" style="left:327.2px;width:40px;top:218.06px">5,953</div>
<div class="dn" style="left:351.7px;width:40px;top:218.06px">7</div>
<div class="dn" style="left:378.5px;width:40px;top:218.06px">1,843</div>
<div class="dn" style="left:412.2px;width:40px;top:218.06px">2,556</div>
<div class="dn" style="left:451.5px;width:40px;top:218.06px">40</div>
<div class="dn" style="left:493.1px;width:40px;top:218.06px">10,959</div>
<div class="dn" style="left:542.3px;width:40px;top:218.06px">15,642</div>
<div class="drow" style="top:224.73px;height:7.17px;left:94.0px;width:491.2px"></div>
<div class="dt" style="left:95.5px;top:225.23px">1004 Mens Footwear - Casual Footwear</div>
<div class="dn" style="left:181.0px;width:40px;top:225.23px">63</div>
<div class="dn" style="left:207.8px;width:40px;top:225.23px">13,583</div>
<div class="dn" style="left:241.3px;width:40px;top:225.23px">19,027</div>
<div class="dn" style="left:266.7px;width:40px;top:225.23px">66</div>
<div class="dn" style="left:292.9px;width:40px;top:225.23px">13,058</div>
<div class="dn" style="left:327.2px;width:40px;top:225.23px">19,441</div>
<div class="dn" style="left:351.7px;width:40px;top:225.23px">20</div>
<div class="dn" style="left:378.5px;width:40px;top:225.23px">4,245</div>
<div class="dn" style="left:412.2px;width:40px;top:225.23px">5,514</div>
<div class="dn" style="left:451.5px;width:40px;top:225.23px">149</div>
<div class="dn" style="left:493.1px;width:40px;top:225.23px">30,887</div>
<div class="dn" style="left:542.3px;width:40px;top:225.23px">44,783</div>
<div class="drow alt" style="top:231.90px;height:7.17px;left:94.0px;width:491.2px"></div>
<div class="dt" style="left:95.5px;top:232.40px">1005 Mens Footwear - Casual Sandals</div>
<div class="dn" style="left:181.0px;width:40px;top:232.40px">8</div>
<div class="dn" style="left:207.8px;width:40px;top:232.40px">1,066</div>
<div class="dn" style="left:241.3px;width:40px;top:232.40px">2,232</div>
<div class="dn" style="left:266.7px;width:40px;top:232.40px">5</div>
<div class="dn" style="left:292.9px;width:40px;top:232.40px">805</div>
<div class="dn" style="left:327.2px;width:40px;top:232.40px">1,820</div>
<div class="dn" style="left:351.7px;width:40px;top:232.40px">1</div>
<div class="dn" style="left:378.5px;width:40px;top:232.40px">216</div>
<div class="dn" style="left:412.2px;width:40px;top:232.40px">359</div>
<div class="dn" style="left:451.5px;width:40px;top:232.40px">14</div>
<div class="dn" style="left:493.1px;width:40px;top:232.40px">2,091</div>
<div class="dn" style="left:542.3px;width:40px;top:232.40px">4,411</div>
<div class="drow" style="top:239.07px;height:7.17px;left:94.0px;width:491.2px"></div>
<div class="dt" style="left:95.5px;top:239.57px">1006 Mens Footwear - Formal Footwear</div>
<div class="dn" style="left:181.0px;width:40px;top:239.57px">51</div>
<div class="dn" style="left:207.8px;width:40px;top:239.57px">18,122</div>
<div class="dn" style="left:241.3px;width:40px;top:239.57px">30,090</div>
<div class="dn" style="left:266.7px;width:40px;top:239.57px">50</div>
<div class="dn" style="left:292.9px;width:40px;top:239.57px">19,334</div>
<div class="dn" style="left:327.2px;width:40px;top:239.57px">36,383</div>
<div class="dn" style="left:351.7px;width:40px;top:239.57px">17</div>
<div class="dn" style="left:378.5px;width:40px;top:239.57px">5,948</div>
<div class="dn" style="left:412.2px;width:40px;top:239.57px">10,111</div>
<div class="dn" style="left:451.5px;width:40px;top:239.57px">118</div>
<div class="dn" style="left:493.1px;width:40px;top:239.57px">43,404</div>
<div class="dn" style="left:542.3px;width:40px;top:239.57px">76,584</div>
<div class="drow alt" style="top:246.24px;height:7.17px;left:94.0px;width:491.2px"></div>
<div class="dt" style="left:95.5px;top:246.74px">1007 Mens Footwear - Formal Sandals</div>
<div class="dn" style="left:181.0px;width:40px;top:246.74px">3</div>
<div class="dn" style="left:207.8px;width:40px;top:246.74px">906</div>
<div class="dn" style="left:241.3px;width:40px;top:246.74px">1,682</div>
<div class="dn" style="left:266.7px;width:40px;top:246.74px">4</div>
<div class="dn" style="left:292.9px;width:40px;top:246.74px">1,302</div>
<div class="dn" style="left:327.2px;width:40px;top:246.74px">2,651</div>
<div class="dn" style="left:351.7px;width:40px;top:246.74px">2</div>
<div class="dn" style="left:378.5px;width:40px;top:246.74px">333</div>
<div class="dn" style="left:412.2px;width:40px;top:246.74px">393</div>
<div class="dn" style="left:451.5px;width:40px;top:246.74px">9</div>
<div class="dn" style="left:493.1px;width:40px;top:246.74px">2,548</div>
<div class="dn" style="left:542.3px;width:40px;top:246.74px">4,726</div>
<div class="drow" style="top:253.41px;height:7.17px;left:94.0px;width:491.2px"></div>
<div class="dt" style="left:95.5px;top:253.91px">1101 Mens Formal - Jackets &amp; Coats</div>
<div class="dn" style="left:181.0px;width:40px;top:253.91px">24</div>
<div class="dn" style="left:207.8px;width:40px;top:253.91px">9,752</div>
<div class="dn" style="left:241.3px;width:40px;top:253.91px">14,189</div>
<div class="dn" style="left:266.7px;width:40px;top:253.91px">16</div>
<div class="dn" style="left:292.9px;width:40px;top:253.91px">7,570</div>
<div class="dn" style="left:327.2px;width:40px;top:253.91px">14,929</div>
<div class="dn" style="left:351.7px;width:40px;top:253.91px">4</div>
<div class="dn" style="left:378.5px;width:40px;top:253.91px">1,796</div>
<div class="dn" style="left:412.2px;width:40px;top:253.91px">1,365</div>
<div class="dn" style="left:451.5px;width:40px;top:253.91px">44</div>
<div class="dn" style="left:493.1px;width:40px;top:253.91px">19,117</div>
<div class="dn" style="left:542.3px;width:40px;top:253.91px">30,484</div>
<div class="drow alt" style="top:260.58px;height:7.17px;left:94.0px;width:491.2px"></div>
<div class="dt" style="left:95.5px;top:261.08px">1102 Mens Formal - Shirts</div>
<div class="dn" style="left:181.0px;width:40px;top:261.08px">12</div>
<div class="dn" style="left:207.8px;width:40px;top:261.08px">1,806</div>
<div class="dn" style="left:241.3px;width:40px;top:261.08px">3,608</div>
<div class="dn" style="left:266.7px;width:40px;top:261.08px">17</div>
<div class="dn" style="left:292.9px;width:40px;top:261.08px">2,645</div>
<div class="dn" style="left:327.2px;width:40px;top:261.08px">5,634</div>
<div class="dn" style="left:351.7px;width:40px;top:261.08px">4</div>
<div class="dn" style="left:378.5px;width:40px;top:261.08px">667</div>
<div class="dn" style="left:412.2px;width:40px;top:261.08px">1,138</div>
<div class="dn" style="left:451.5px;width:40px;top:261.08px">33</div>
<div class="dn" style="left:493.1px;width:40px;top:261.08px">5,118</div>
<div class="dn" style="left:542.3px;width:40px;top:261.08px">10,379</div>
<div class="drow" style="top:267.75px;height:7.17px;left:94.0px;width:491.2px"></div>
<div class="dt" style="left:95.5px;top:268.25px">1103 Mens Formal - Trousers</div>
<div class="dn" style="left:181.0px;width:40px;top:268.25px">34</div>
<div class="dn" style="left:207.8px;width:40px;top:268.25px">4,544</div>
<div class="dn" style="left:241.3px;width:40px;top:268.25px">10,603</div>
<div class="dn" style="left:266.7px;width:40px;top:268.25px">55</div>
<div class="dn" style="left:292.9px;width:40px;top:268.25px">8,044</div>
<div class="dn" style="left:327.2px;width:40px;top:268.25px">19,081</div>
<div class="dn" style="left:351.7px;width:40px;top:268.25px">17</div>
<div class="dn" style="left:378.5px;width:40px;top:268.25px">2,343</div>
<div class="dn" style="left:412.2px;width:40px;top:268.25px">5,653</div>
<div class="dn" style="left:451.5px;width:40px;top:268.25px">110</div>
<div class="dn" style="left:493.1px;width:40px;top:268.25px">14,931</div>
<div class="dn" style="left:542.3px;width:40px;top:268.25px">35,337</div>
<div class="drow alt" style="top:274.92px;height:7.17px;left:94.0px;width:491.2px"></div>
<div class="dt" style="left:95.5px;top:275.42px">1104 Mens Formal - Suits</div>
<div class="dn" style="left:181.0px;width:40px;top:275.42px">5</div>
<div class="dn" style="left:207.8px;width:40px;top:275.42px">3,624</div>
<div class="dn" style="left:241.3px;width:40px;top:275.42px">9,205</div>
<div class="dn" style="left:266.7px;width:40px;top:275.42px">17</div>
<div class="dn" style="left:292.9px;width:40px;top:275.42px">10,540</div>
<div class="dn" style="left:327.2px;width:40px;top:275.42px">26,030</div>
<div class="dn" style="left:351.7px;width:40px;top:275.42px">6</div>
<div class="dn" style="left:378.5px;width:40px;top:275.42px">2,503</div>
<div class="dn" style="left:412.2px;width:40px;top:275.42px">7,625</div>
<div class="dn" style="left:451.5px;width:40px;top:275.42px">29</div>
<div class="dn" style="left:493.1px;width:40px;top:275.42px">17,147</div>
<div class="dn" style="left:542.3px;width:40px;top:275.42px">42,860</div>
<div class="drow" style="top:282.09px;height:7.17px;left:94.0px;width:491.2px"></div>
<div class="dt" style="left:95.5px;top:282.59px">1202 Sleep / Underwear - Underwear</div>
<div class="dn" style="left:181.0px;width:40px;top:282.59px">87</div>
<div class="dn" style="left:207.8px;width:40px;top:282.59px">3,225</div>
<div class="dn" style="left:241.3px;width:40px;top:282.59px">8,160</div>
<div class="dn" style="left:266.7px;width:40px;top:282.59px">165</div>
<div class="dn" style="left:292.9px;width:40px;top:282.59px">4,551</div>
<div class="dn" style="left:327.2px;width:40px;top:282.59px">10,510</div>
<div class="dn" style="left:351.7px;width:40px;top:282.59px">68</div>
<div class="dn" style="left:378.5px;width:40px;top:282.59px">2,030</div>
<div class="dn" style="left:412.2px;width:40px;top:282.59px">4,912</div>
<div class="dn" style="left:451.5px;width:40px;top:282.59px">320</div>
<div class="dn" style="left:493.1px;width:40px;top:282.59px">9,806</div>
<div class="dn" style="left:542.3px;width:40px;top:282.59px">23,582</div>
<div class="ind" style="left:87.0px;top:88.5px;width:7.0px;height:200.76px"></div>
<div class="vl" style="left:198.1px;top:88.5px;height:200.76px"></div>
<div class="vl" style="left:222.9px;top:88.5px;height:200.76px"></div>
<div class="vl" style="left:249.8px;top:88.5px;height:200.76px"></div>
<div class="vl" style="left:283.3px;top:88.5px;height:200.76px"></div>
<div class="vl" style="left:308.7px;top:88.5px;height:200.76px"></div>
<div class="vl" style="left:335.0px;top:88.5px;height:200.76px"></div>
<div class="vl" style="left:368.9px;top:88.5px;height:200.76px"></div>
<div class="vl" style="left:393.0px;top:88.5px;height:200.76px"></div>
<div class="vl" style="left:420.2px;top:88.5px;height:200.76px"></div>
<div class="vl" style="left:453.8px;top:88.5px;height:200.76px"></div>
<div class="vl" style="left:493.1px;top:88.5px;height:200.76px"></div>
<div class="vl" style="left:534.7px;top:88.5px;height:200.76px"></div>
<div class="vl" style="left:585.2px;top:88.5px;height:200.76px"></div>
<div class="fn" style="left:181.7px;width:40px;top:396.79999999999995px">855</div>
<div class="fn" style="left:208.5px;width:40px;top:396.79999999999995px">159,561</div>
<div class="fn" style="left:242.0px;width:40px;top:396.79999999999995px">267,924</div>
<div class="fn" style="left:267.4px;width:40px;top:396.79999999999995px">899</div>
<div class="fn" style="left:293.6px;width:40px;top:396.79999999999995px">153,597</div>
<div class="fn" style="left:327.9px;width:40px;top:396.79999999999995px">288,948</div>
<div class="fn" style="left:352.4px;width:40px;top:396.79999999999995px">345</div>
<div class="fn" style="left:379.2px;width:40px;top:396.79999999999995px">51,835</div>
<div class="fn" style="left:412.9px;width:40px;top:396.79999999999995px">90,465</div>
<div class="fn" style="left:452.2px;width:40px;top:396.79999999999995px">2,099</div>
<div class="fn" style="left:493.8px;width:40px;top:396.79999999999995px">364,993</div>
<div class="fn" style="left:543.0px;width:40px;top:396.79999999999995px">647,337</div>
<div class="fvl" style="left:198.1px;top:396.4px"></div>
<div class="fvl" style="left:222.9px;top:396.4px"></div>
<div class="fvl" style="left:249.8px;top:396.4px"></div>
<div class="fvl" style="left:283.3px;top:396.4px"></div>
<div class="fvl" style="left:308.7px;top:396.4px"></div>
<div class="fvl" style="left:335.0px;top:396.4px"></div>
<div class="fvl" style="left:368.9px;top:396.4px"></div>
<div class="fvl" style="left:393.0px;top:396.4px"></div>
<div class="fvl" style="left:420.2px;top:396.4px"></div>
<div class="fvl" style="left:453.8px;top:396.4px"></div>
<div class="fvl" style="left:493.1px;top:396.4px"></div>
<div class="fvl" style="left:534.7px;top:396.4px"></div>
<div class="fvl" style="left:585.2px;top:396.4px"></div>
<div id="fline"></div><div id="fline2"></div>
<div id="hscroll"></div>
<div id="vscroll"></div>
<div id="bline"></div>
<div id="bwhite"></div>
<div id="btool"></div>

<div id="grip"></div>
<svg id="appico" style="left:0;top:1px" width="6" height="7" viewBox="0 0 6 7"><rect x="0" y="1.2" width="4.6" height="4.6" fill="#b5532a"/><rect x="2.2" y="0.4" width="3.2" height="3.4" fill="#f0c23a"/><rect x="0" y="4.6" width="3" height="1.6" fill="#7a3a28"/><rect x="3.2" y="4.4" width="1.6" height="2" fill="#3a5a9a"/></svg>
<svg id="wc" viewBox="0 0 30 9"><path d="M3.3 4.6h3" stroke="#7d8799" stroke-width="0.9" fill="none"/><path d="M13.2 3h3v2.8h-3z M14.4 3v-1.2h3v2.8h-1.2" stroke="#5a6478" stroke-width="0.8" fill="none"/><path d="M23.6 1.8l3.2 3.4M26.8 1.8l-3.2 3.4" stroke="#5a6478" stroke-width="0.9" fill="none"/></svg>
<div id="ovf"></div>
<svg id="qaico" style="left:3px;top:24px" width="18" height="18" viewBox="0 0 18 18"><path d="M2 15.2 L3.4 11.2 L2.6 10.8 L7.6 8.8 L11.4 8.4 L11.6 9.8 L8.4 11 L6 11.6 Z" fill="#26b4d6"/><path d="M6.6 9.2 L11.4 8.2 L11.8 10 L8.2 11 Z" fill="#1f6fd2"/><path d="M4 3.6l6 -0.6l-3 4.4 M7.6 2.4l2 5 M9.6 1.2l1.6 6.4 M8.2 3.6l5 1.2 M11 6.6l4.8 -2.2 M10.4 4.2l3 3.4 M12.4 2.8l-0.8 4.6" stroke="#45489c" stroke-width="0.6" fill="none"/></svg>
<div id="pin">±</div>
<svg style="left:72.2px;top:47.8px" width="4" height="5" viewBox="0 0 4 5"><path d="M0.4 2.2 L2 0.6 L3.6 2.2 M0.4 4.4 L2 2.8 L3.6 4.4" stroke="#5a5f68" stroke-width="0.7" fill="none"/></svg>
<svg id="hdrico" style="left:91px;top:25px" width="27" height="23" viewBox="0 0 27 23"><defs><linearGradient id="hg" x1="0.9" y1="0" x2="0.15" y2="1"><stop offset="0" stop-color="#e2f0f9"/><stop offset="0.45" stop-color="#a9d2ec"/><stop offset="1" stop-color="#5aa6d8"/></linearGradient></defs><path d="M9 9.2 L24.8 9.4 Q22.6 17 19 22 L4 19.8 Z" fill="#9fcdea" opacity="0.8"/><path d="M8.8 8 L24.6 8.4 Q22.2 15.8 18.6 20.8 L3.4 18.6 Z" fill="#c4e0f2" opacity="0.9"/><path d="M8.4 6.6 L24.2 7.4 Q21.8 14.6 18.2 19.6 L3 17.2 Z" fill="url(#hg)"/><path d="M3 17.2 L18.2 19.6 L18.3 20.4 L3.2 18.2 Z" fill="#4f97cc"/><circle cx="6.7" cy="5.6" r="4.9" fill="none" stroke="#85898f" stroke-width="0.7" stroke-dasharray="1.1 1.1"/><circle cx="6.7" cy="5.6" r="4.3" fill="#fdfdfd" stroke="#63676d" stroke-width="0.7"/><circle cx="6.7" cy="5.6" r="2.7" fill="#fff" stroke="#7a7e84" stroke-width="0.6"/><circle cx="12.1" cy="11.3" r="3.7" fill="none" stroke="#85898f" stroke-width="0.6" stroke-dasharray="0.9 0.9"/><circle cx="12.1" cy="11.3" r="3.1" fill="#f6f7f8" stroke="#63676d" stroke-width="0.7"/><circle cx="12.1" cy="11.3" r="1.4" fill="#8a949c" stroke="#5c6066" stroke-width="0.5"/></svg>
<div id="ecl">eclipse</div>
<svg style="left:696.4px;top:31.6px" width="8" height="12" viewBox="0 0 8 12"><circle cx="3.6" cy="4.2" r="2.5" fill="none" stroke="#29a3d3" stroke-width="0.9"/><path d="M3.6 6.6v4.2" stroke="#29a3d3" stroke-width="0.8"/></svg>
<div id="ecl2">TECHNOLOGIES</div>
<div id="ecl3">TECHNOLOGIES</div>
<div id="jc"><div class="t">JOHN CRAIG</div></div>
<div id="sdots"></div>
<div id="lbdots"></div><div id="lbarr"></div>
<!-- nav icons -->
<svg style="left:6.5px;top:328px" width="10" height="11" viewBox="0 0 10 11"><path d="M2.4 1.6 L8 0.8 L7 3.2 L3 3.8 Z M2.2 4.4 L7.4 3.6 L6.6 6.2 L2.8 6.6 Z M1.6 7.4 L6.6 6.8 L5.8 9.4 L2 9.8 Z" fill="#8fc3a3"/><path d="M5.2 0.4 C3 1.6 7.4 4.4 4.8 5.6 C2.6 6.8 6 8.6 4.2 10.4" stroke="#5a9a78" stroke-width="0.7" fill="none"/></svg>
<svg style="left:6.5px;top:342px" width="11" height="10" viewBox="0 0 11 10"><circle cx="3" cy="2.4" r="1.7" fill="#5a3420"/><path d="M0.2 9 V6 Q0.2 4.2 3 4.2 Q5.6 4.2 5.6 6 V9 Z" fill="#2456b8"/><circle cx="7.6" cy="2.6" r="1.7" fill="#3a2418"/><path d="M4.8 9.2 V6.2 Q4.8 4.4 7.6 4.4 Q10.2 4.4 10.2 6.2 V9.2 Z" fill="#c62828"/><path d="M3 4.4l0.6 2.4l-0.6 1l-0.6-1z" fill="#f4d9c0"/></svg>
<svg style="left:6.3px;top:354.6px" width="11" height="11" viewBox="0 0 11 11"><defs><radialGradient id="mg" cx="0.4" cy="0.35" r="0.7"><stop offset="0" stop-color="#ffe27a"/><stop offset="1" stop-color="#ee9a1c"/></radialGradient></defs><circle cx="5.4" cy="5.4" r="4.9" fill="url(#mg)" stroke="#c98a1e" stroke-width="0.5"/><path d="M5.6 5.2 L9 4.6 L8.6 7.6 L6.4 8.4 Z" fill="#fff6e0"/><path d="M2 6.4 L4.4 6 L4.6 8.2 L2.8 8 Z" fill="#f7c65a"/></svg>
<svg style="left:7px;top:368.4px" width="10" height="10" viewBox="0 0 10 10"><rect x="0.3" y="0.3" width="8.6" height="9" fill="#fafafa" stroke="#1a1a1a" stroke-width="0.9"/><rect x="0.3" y="0.3" width="8.6" height="2.4" fill="#1a1a1a"/><rect x="5.6" y="5.4" width="2" height="3" fill="#2a2a2a"/></svg>
<svg style="left:6.6px;top:381.6px" width="10" height="10" viewBox="0 0 10 10"><path d="M0.8 0.8 L8.8 9.2" stroke="#8796ab" stroke-width="1.3"/><path d="M9 0.8 L1 9.2" stroke="#6f8098" stroke-width="1.3"/><circle cx="1.4" cy="1.4" r="1.3" fill="#9aa8bb"/><path d="M0.4 8.2l1.8 1.6" stroke="#4f6ea8" stroke-width="1.4"/></svg>
<svg style="left:6.8px;top:395.4px" width="10" height="10" viewBox="0 0 10 10"><path d="M0.6 1.2 L6.8 0.4 L8.2 6.6 L2 7.6 Z" fill="#4a4e55"/><path d="M1.8 2 L6 1.4 L7 5.8 L2.8 6.6 Z" fill="#e9f2e4"/><path d="M3.2 3 L5 2.8 L5.6 5.4 L3.8 5.6 Z" fill="#555b60"/><path d="M2 7.6 L8.2 6.6 L9 8.4 L3 9.4 Z" fill="#7d838c"/></svg>
<svg style="left:6.6px;top:408.6px" width="11" height="11" viewBox="0 0 11 11"><path d="M1 10 L1.8 7.6 L5.8 4.8 L7.2 6 L3.6 8.6 Z" fill="#1fa7c9"/><path d="M4.6 5.6 L7 4.2 L8 5.6 L5.6 7 Z" fill="#2a62c8"/><path d="M5.6 0.8 l1 2 l2.2 0.2 l-1.6 1.5 l0.5 2.2 l-2.1 -1.1 l-1.9 1.1 l0.4 -2.2 l-1.6 -1.5 l2.2 -0.2z" fill="#b96ab0" opacity="0.9"/><circle cx="8.6" cy="3" r="0.8" fill="#7b5fc0"/></svg>
<!-- bottom toolbar icons -->
<svg style="left:88px;top:417.6px" width="13" height="13" viewBox="0 0 13 13"><path d="M1.2 3.4 Q1.2 2.2 2.4 2 L10.4 0.8 Q11.8 0.8 11.8 2.2 V9.6 Q11.8 10.6 10.6 10.8 L2.6 12.2 Q1.2 12.2 1.2 11 Z" fill="#2a55c0"/><path d="M2.8 5.2 L10.4 4 V9.4 L2.8 10.8 Z" fill="#f3f6fb"/><path d="M6.4 4.8v5.4M2.8 7.6l7.6-1.3" stroke="#c9a9a0" stroke-width="0.5"/><path d="M1.2 3.4 Q1.2 2.2 2.4 2 L10.4 0.8 Q11.8 0.8 11.8 2.2 V3.6 L1.2 5.2Z" fill="#3b6ad8"/></svg>
<svg style="left:753px;top:417.6px" width="14" height="14" viewBox="0 0 14 14"><rect x="0.4" y="0.4" width="12.6" height="12.4" fill="#93cf3a" stroke="#3a7a18" stroke-width="0.9"/><rect x="1.4" y="1.4" width="10.6" height="2" fill="#c4e58a"/><path d="M3.6 3.4 L9.8 11.4 M9.8 3.4 L3.6 11.4" stroke="#d9f2b0" stroke-width="1.8"/><path d="M4.2 3.8 L9.4 11 M9.4 3.8 L4.2 11" stroke="#3f8f1f" stroke-width="0.8"/><rect x="0.4" y="11.2" width="12.6" height="1.6" fill="#2f6b14"/></svg>
<svg style="left:769.6px;top:418px" width="13" height="13" viewBox="0 0 13 13"><path d="M3 1 L8 0.4 L9.6 3.4 L4 4.4 Z" fill="#f4f6f9" stroke="#aab3c0" stroke-width="0.4"/><path d="M0.8 5 L9.8 3.2 L11.6 6 L11.4 8.6 L3 10.6 L0.8 8 Z" fill="#e3e8ef" stroke="#9aa5b5" stroke-width="0.4"/><path d="M5.2 4.8 L9.6 3.9 L10.6 5.6 L6.2 6.6 Z" fill="#3f7fd6"/><path d="M4 9 L9.4 7.8 L11.6 10.8 L6.4 12.2 Z" fill="#f9fafc" stroke="#aab3c0" stroke-width="0.4"/><path d="M8.6 10.2l2.6 1.4l-1 -2.4z" fill="#3a9a3a"/></svg>
<div style="left:786.4px;top:423.6px;width:1.2px;height:1.2px;background:#222;border-radius:1px"></div>
<svg style="left:790.4px;top:418px" width="14" height="13" viewBox="0 0 14 13"><path d="M7.6 0.8 L13 4.2 L8.4 7.6 L8.2 5.6 C5.6 5.4 4 6.6 4.6 9 C5 10.4 5.8 11.2 6.4 11.6 C3.2 11.4 0.6 9.4 0.8 6.6 C1 3.8 3.8 2.6 7.6 2.8 Z" fill="#b7d2f4" stroke="#3f74cc" stroke-width="0.8" stroke-linejoin="round"/></svg>
<!-- scroll arrows -->
<svg style="left:799.6px;top:62.8px" width="4" height="3" viewBox="0 0 4 3"><path d="M0 2.6 L2 0.2 L4 2.6Z" fill="#8a8f98"/></svg>
<svg style="left:799.6px;top:398.8px" width="4" height="3" viewBox="0 0 4 3"><path d="M0 0.2 L2 2.6 L4 0.2Z" fill="#8a8f98"/></svg>
<svg style="left:88.6px;top:405.4px" width="3" height="4" viewBox="0 0 3 4"><path d="M2.6 0 L0.2 2 L2.6 4Z" fill="#8a8f98"/></svg>
<svg style="left:793.2px;top:405.4px" width="3" height="4" viewBox="0 0 3 4"><path d="M0.2 0 L2.6 2 L0.2 4Z" fill="#8a8f98"/></svg>
<div id="vline"></div>
<div id="sline"></div>
<div id="status">
<div class="sep" style="left:476.1px"></div><div class="sep" style="left:601.2px"></div><div class="sep" style="left:623.5px"></div><div class="sep" style="left:685px"></div><div class="sep" style="left:754.7px"></div>
<div class="s" style="left:363.7px;transform:scaleX(.963)">Last Successful Sync Date: 21/11/2013 10:08:03 AM</div>
<div class="s" style="left:481.8px;transform:scaleX(.943)">Version: 1.0.0.0</div>
<div class="s" style="left:517.4px;transform:scaleX(.99)">Henk Geels : 21/11/2013 10:11:00 AM</div>
<div class="s" style="left:605.2px;transform:scaleX(.87)">Printers</div>
<div class="s" style="left:627.8px;transform:scaleX(.94)">HADES\SQLSERVER2012</div>
<div class="s" style="left:688.8px;transform:scaleX(.94)">0100 Merchandise Head Office</div>
<div class="s" style="left:765px;color:#d01818;font-weight:bold;font-size:5.2px;transform:scaleX(.96)">Working Offline</div>
<svg style="left:7.4px;top:5.2px" width="10" height="4" viewBox="0 0 10 4"><path d="M0.6 4 A4.4 4.4 0 0 1 9.4 4" fill="#e9f0f8" stroke="#9aaec6" stroke-width="0.8"/></svg>
</div>
<svg style="left:757.8px;top:435px" width="6" height="6" viewBox="0 0 6 6"><path d="M3 0.4 L5.7 5.6 H0.3 Z" fill="#f5eec4" stroke="#c2ac62" stroke-width="0.5"/><path d="M3 2v2" stroke="#5a4a10" stroke-width="0.6"/></svg>
</div></div></body></html>
